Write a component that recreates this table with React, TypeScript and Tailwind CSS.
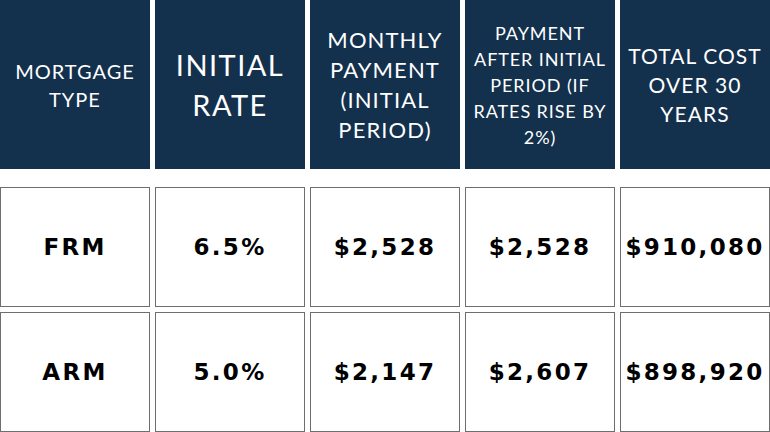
import React from 'react';

type Header = { lines: string[]; className: string };

const headers: Header[] = [
  { lines: ['MORTGAGE', 'TYPE'], className: 'text-[20px] leading-[28px]' },
  { lines: ['INITIAL', 'RATE'], className: 'text-[29px] leading-[40px]' },
  { lines: ['MONTHLY', 'PAYMENT', '(INITIAL', 'PERIOD)'], className: 'text-[22px] leading-[30px]' },
  {
    lines: ['PAYMENT', 'AFTER INITIAL', 'PERIOD (IF', 'RATES RISE BY', '2%)'],
    className: 'text-[18px] leading-[26px]',
  },
  { lines: ['TOTAL COST', 'OVER 30', 'YEARS'], className: 'text-[21px] leading-[29px]' },
];

const rows: string[][] = [
  ['FRM', '6.5%', '$2,528', '$2,528', '$910,080'],
  ['ARM', '5.0%', '$2,147', '$2,607', '$898,920'],
];

export default function App() {
  return (
    <div className="w-[770px] h-[432px] bg-white overflow-hidden flex flex-col">
      <div className="grid grid-cols-5 gap-x-[5px] h-[169px]">
        {headers.map((h, i) => (
          <div
            key={i}
            className="bg-[#13304d] flex flex-col items-center justify-center text-white text-center"
          >
            <div className={`font-['Lato',sans-serif] tracking-[0.05em] ${h.className}`}>
              {h.lines.map((line) => (
                <div key={line} className="whitespace-nowrap">
                  {line}
                </div>
              ))}
            </div>
          </div>
        ))}
      </div>

      <div className="mt-[18px] flex flex-col gap-[5px]">
        {rows.map((row, r) => (
          <div key={r} className="grid grid-cols-5 gap-x-[5px] h-[120px]">
            {row.map((cell, c) => (
              <div
                key={c}
                className="border border-[#6e6e6e] flex items-center justify-center"
              >
                <span className="font-['DejaVu_Sans',sans-serif] font-bold text-[23px] tracking-[0.1em] text-black">
                  {cell}
                </span>
              </div>
            ))}
          </div>
        ))}
      </div>
    </div>
  );
}
